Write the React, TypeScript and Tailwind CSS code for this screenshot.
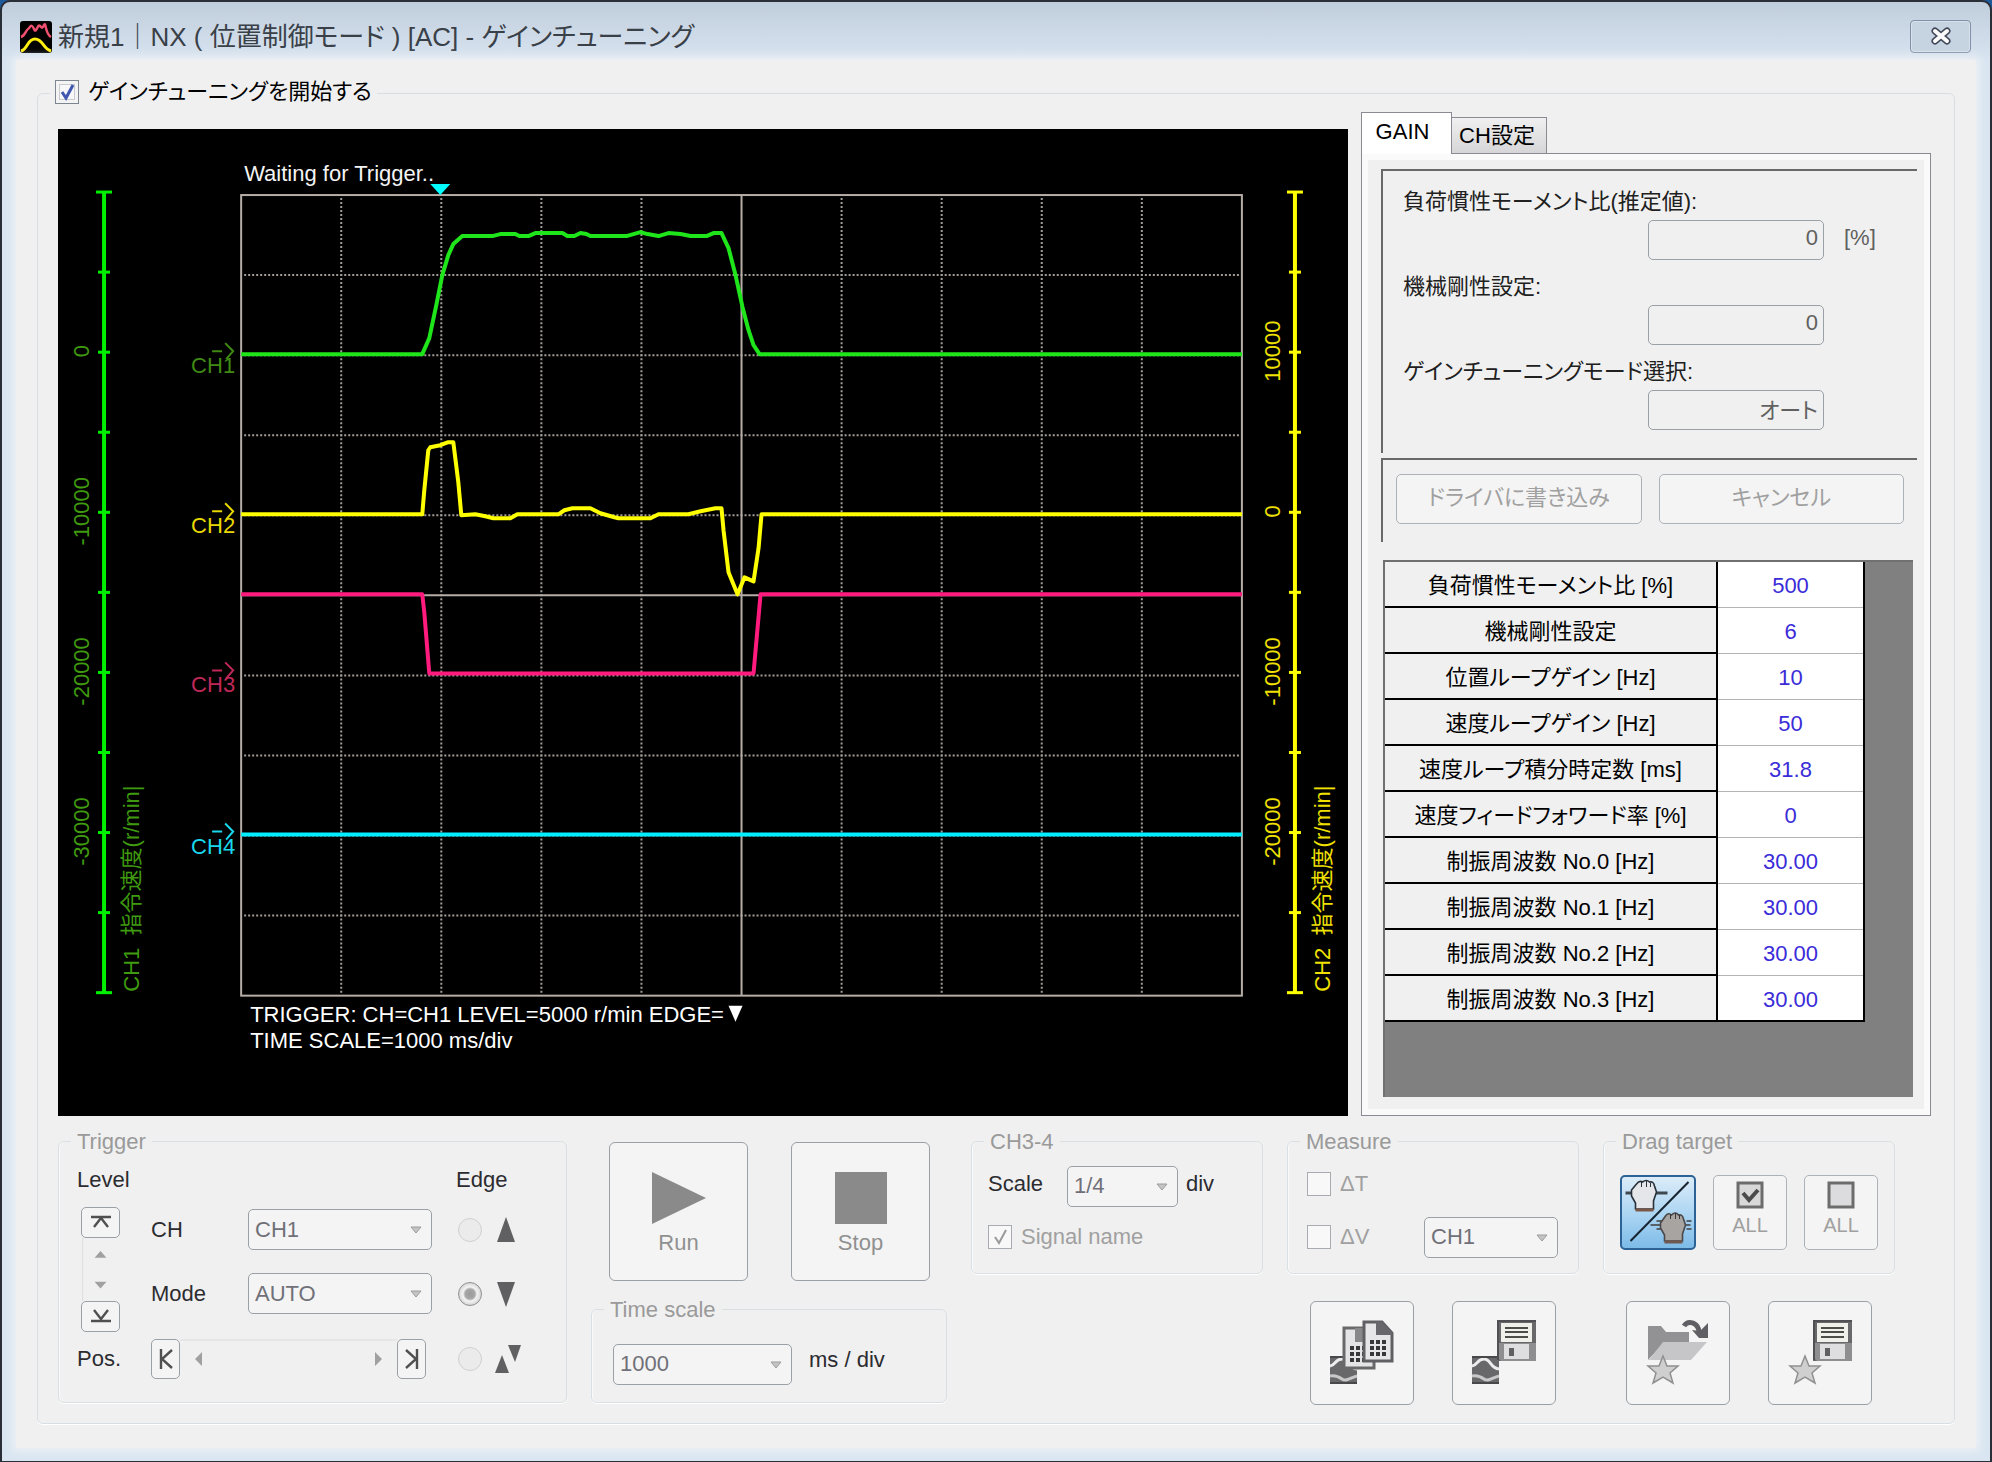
import React from "react";

type Point = [number, number];

const path = (pts: Point[]) => pts.map((p) => p.join(",")).join(" ");

const speedCommand: Point[] = [
  [241, 354], [422, 354], [429, 338], [436, 305], [442, 275], [448, 255], [453, 244], [462, 236],
  [492, 236], [500, 234], [515, 234], [519, 236], [528, 236], [535, 233], [562, 233], [567, 236],
  [574, 236], [580, 233], [586, 234], [590, 236], [626, 236], [633, 234], [640, 232], [647, 234],
  [658, 236], [668, 233], [680, 234], [690, 236], [706, 236], [713, 233], [721, 233], [728, 248],
  [735, 275], [742, 307], [748, 330], [753, 345], [759, 354], [1241, 354],
];

const torque: Point[] = [
  [241, 514], [422, 514], [424, 490], [428, 450], [430, 447], [440, 445], [448, 442], [453, 442],
  [455, 458], [458, 482], [461, 515], [475, 514], [485, 516], [493, 518], [510, 518], [517, 514],
  [558, 514], [564, 510], [572, 508], [590, 508], [600, 513], [614, 517], [618, 518], [650, 518], [658, 514],
  [688, 514], [700, 511], [715, 508], [721, 508], [723, 530], [728, 572], [737, 594], [744, 577],
  [753, 581], [758, 548], [761, 514], [1241, 514],
];

const positioning: Point[] = [
  [241, 594], [422, 594], [424, 612], [429, 673], [753, 673], [760, 594], [1241, 594],
];

const channels = [
  { name: "CH1", y: 354, color: "#3f8a12" },
  { name: "CH2", y: 514, color: "#e8d800" },
  { name: "CH3", y: 673, color: "#c02858" },
  { name: "CH4", y: 834, color: "#19d8ee" },
];

const parameters = [
  ["負荷慣性モーメント比 [%]", "500"],
  ["機械剛性設定", "6"],
  ["位置ループゲイン [Hz]", "10"],
  ["速度ループゲイン [Hz]", "50"],
  ["速度ループ積分時定数 [ms]", "31.8"],
  ["速度フィードフォワード率 [%]", "0"],
  ["制振周波数 No.0 [Hz]", "30.00"],
  ["制振周波数 No.1 [Hz]", "30.00"],
  ["制振周波数 No.2 [Hz]", "30.00"],
  ["制振周波数 No.3 [Hz]", "30.00"],
];

function Axis({ x, color, labelX, labelColor, ticks, title, titleX }: {
  x: number; color: string; labelX: number; labelColor: string; ticks: string[]; title: string; titleX: number;
}) {
  return (
    <g>
      <line x1={x} x2={x} y1={192} y2={992} stroke={color} strokeWidth={4} />
      {Array.from({ length: 11 }, (_, i) => {
        const half = i === 0 || i === 10 ? 8 : 6;
        return <line key={i} x1={x - half} x2={x + half} y1={192 + i * 80} y2={192 + i * 80} stroke={color} strokeWidth={3} />;
      })}
      {ticks.map((t, i) => {
        const y = 351 + i * 160;
        return (
          <text key={t} transform={`translate(${labelX} ${y}) rotate(-90)`} textAnchor="middle" fill={labelColor}>
            {t}
          </text>
        );
      })}
      <text transform={`translate(${titleX} 991) rotate(-90)`} fill={labelColor} xmlSpace="preserve">
        {title}
      </text>
    </g>
  );
}

function Scope() {
  return (
    <svg
      viewBox="58 129 1289 986"
      className="block h-auto w-full bg-black text-[22px] [font-feature-settings:'palt']"
      role="img"
      aria-label="Waveform monitor"
    >
      <text x={244} y={181} fill="#f4f4f4">Waiting for Trigger..</text>
      <g stroke="#a39c96" strokeWidth={2} strokeDasharray="2 2">
        {[1, 2, 3, 4, 6, 7, 8, 9].map((i) => (
          <g key={i}>
            <line x1={241 + i * 100} x2={241 + i * 100} y1={198} y2={994} />
            <line x1={244} x2={1240} y1={195 + i * 80} y2={195 + i * 80} />
          </g>
        ))}
      </g>
      <g stroke="#b5ada6" strokeWidth={2} fill="none">
        <rect x={241} y={195} width={1000} height={800} />
        <line x1={741} x2={741} y1={195} y2={995} />
        <line x1={241} x2={1241} y1={595} y2={595} />
      </g>
      <g fill="none" strokeWidth={4} strokeLinejoin="round">
        <polyline points={path(positioning)} stroke="#ff1a7d" />
        <polyline points={path(torque)} stroke="#ffff00" />
        <polyline points={path(speedCommand)} stroke="#1fe61a" />
        <line x1={241} x2={1241} y1={834} y2={834} stroke="#00eeff" />
      </g>
      <polygon points="430,184 450,184 440,195" fill="#00ffff" />
      {channels.map((c) => (
        <g key={c.name}>
          <path d={`M212 ${c.y - 3}H222M225 ${c.y - 11}L233 ${c.y - 3}L226 ${c.y + 5}`} fill="none" stroke={c.color} strokeWidth={2} />
          <text x={191} y={c.y + 19} fill={c.color}>{c.name}</text>
        </g>
      ))}
      <Axis x={104} color="#00f000" labelX={89} labelColor="#3f9a10" titleX={139}
        ticks={["0", "-10000", "-20000", "-30000"]} title="CH1  指令速度(r/min|" />
      <Axis x={1294} color="#ffff00" labelX={1279} labelColor="#f0e000" titleX={1329}
        ticks={["10000", "0", "-10000", "-20000"]} title="CH2  指令速度(r/min|" />
      <text x={250} y={1021} fill="#fff">TRIGGER: CH=CH1 LEVEL=5000 r/min EDGE=</text>
      <polygon points="728,1005 742,1005 735,1021" fill="#fff" />
      <text x={250} y={1047} fill="#fff">TIME SCALE=1000 ms/div</text>
    </svg>
  );
}

function Group({ title, className, children }: { title: string; className?: string; children: React.ReactNode }) {
  return (
    <fieldset className="min-w-0 rounded-md border border-[#d8e0e4] shadow-[inset_1px_0_0_#fafafa,0_1px_0_#fff]">
      <legend className="ml-3 h-7 bg-[#f0f0f0] px-[6px] leading-7 text-[#9a9a9a]">{title}</legend>
      <div className={className}>{children}</div>
    </fieldset>
  );
}

function Select({ label, value, className }: { label: string; value: string; className: string }) {
  return (
    <div className={`relative h-[41px] ${className}`}>
      <select
        disabled
        aria-label={label}
        defaultValue={value}
        className="h-full w-full appearance-none rounded-[5px] border border-[#9aa0a6] bg-[#f4f4f4] pl-[6px] text-[#707078] opacity-100"
      >
        <option>{value}</option>
      </select>
      <svg viewBox="0 0 12 8" className="pointer-events-none absolute top-[17px] right-[10px] h-2 w-3" aria-hidden="true">
        <path d="M1 1H11L6 7Z" fill="#c4c4c4" stroke="#9c9c9c" />
      </svg>
    </div>
  );
}

function Check({ label, checked, active }: { label: string; checked?: boolean; active?: boolean }) {
  return (
    <label className={`flex items-center gap-[9px] ${active ? "text-black" : "text-[#a0a0a0]"}`}>
      <span className="relative block h-6 w-6 shrink-0">
        <input
          type="checkbox"
          defaultChecked={checked}
          disabled={!active}
          className={`block h-6 w-6 appearance-none border bg-[#f8f8f8] ${active ? "border-[#7d8590] shadow-[inset_0_0_0_3px_#f4f4f4,inset_0_0_0_4px_#c8ccd2]" : "border-[#a8acb0]"}`}
        />
        {checked && (
          <svg viewBox="0 0 24 24" className="pointer-events-none absolute inset-0 h-6 w-6" aria-hidden="true">
            <path d="M7 12L11 18L18 5" fill="none" stroke={active ? "#4258b0" : "#9a9a9a"} strokeWidth={active ? 3 : 2} />
          </svg>
        )}
      </span>
      {label}
    </label>
  );
}

function EndButton({ label, d, className, viewBox }: { label: string; d: string; className: string; viewBox: string }) {
  return (
    <button type="button" disabled aria-label={label} className={`flex items-center justify-center rounded-[5px] border border-[#9aa0a6] bg-[#f4f4f4] ${className}`}>
      <svg viewBox={viewBox} className="h-5 w-5" aria-hidden="true">
        <path d={d} fill="none" stroke="#505050" strokeWidth={2.4} />
      </svg>
    </button>
  );
}

function EdgeOption({ label, checked, children }: { label: string; checked?: boolean; children: React.ReactNode }) {
  return (
    <label className="flex items-center gap-[13px]">
      <input
        type="radio"
        name="edge"
        disabled
        defaultChecked={checked}
        aria-label={label}
        className={`h-6 w-6 appearance-none rounded-full border ${checked ? "border-[#909090] bg-[radial-gradient(circle,#9a9a9a_0,#a8a8a8_5px,#f4f4f4_7px,#d8d8d8_11px)]" : "border-[#d0d0d0] bg-[#ebebeb]"}`}
      />
      <svg viewBox="0 0 28 30" className="h-[30px] w-7" fill="#606062" aria-hidden="true">{children}</svg>
    </label>
  );
}

function Wave() {
  return (
    <g>
      <rect x={0} y={36} width={27} height={28} fill="#68686a" />
      <path d="M0 46C6 45 5 39 12 39S18 48 27 49" fill="none" stroke="#ececec" strokeWidth={3} />
      <path d="M0 56C5 55 8 56 12 59S20 58 27 56" fill="none" stroke="#c8c8c8" strokeWidth={3} />
      <path d="M0 37H27M0 63H27" stroke="#48484a" strokeWidth={2} />
    </g>
  );
}

function Floppy() {
  return (
    <g>
      <rect x={25} y={0} width={39} height={41} fill="#68686a" />
      <path d="M25 23H64V41H29L25 37Z" fill="#8e8e90" />
      <rect x={29} y={3} width={31} height={19} fill="#f0f0ea" />
      <path d="M33 8H56M33 12H56M33 17H56" stroke="#4c4c48" strokeWidth={2} />
      <rect x={32} y={24} width={25} height={15} fill="#dedee0" />
      <rect x={37} y={28} width={5} height={8} fill="#606062" />
      <path d="M26 0V40M25 1H64" stroke="#505054" strokeWidth={2} fill="none" />
    </g>
  );
}

function Star() {
  return <polygon points="17,36 21,46 32,46 24,53 27,63 17,57 7,63 10,53 2,46 13,46" fill="#cfcfcf" stroke="#909090" strokeWidth={1.5} />;
}

function Dots({ x, y }: { x: number; y: number }) {
  return (
    <path
      d={[0, 6, 12].map((dy) => [0, 6, 12].map((dx) => `M${x + dx} ${y + dy}h4`).join("")).join("")}
      stroke="#38383a"
      strokeWidth={4}
    />
  );
}

function IconButton({ label, children }: { label: string; children: React.ReactNode }) {
  return (
    <button type="button" disabled aria-label={label} className="flex h-[104px] w-[104px] items-start rounded-md border border-[#9aa0a6] bg-[#f4f4f4] pt-[18px] pl-[19px]">
      <svg viewBox="0 0 64 64" className="block h-16 w-16 shrink-0 overflow-visible" aria-hidden="true">{children}</svg>
    </button>
  );
}

function Field({ label, value, unit }: { label: string; value: string; unit?: string }) {
  return (
    <label className="block h-[85px]">
      <span className="block h-9 leading-9 text-[#202020]">{label}</span>
      <span className="flex items-center justify-end gap-5">
        <input readOnly value={value} className="h-10 w-[176px] rounded-[5px] border border-[#9aa0a6] bg-[#f0f0f0] px-[5px] pb-1 text-right text-[#606060]" />
        <span className="w-[72px] pb-1 text-[#606060]">{unit}</span>
      </span>
    </label>
  );
}

function TitleBar() {
  return (
    <header className="flex h-[58px] items-center pt-3 pr-[19px] pl-[18px]">
      <svg viewBox="0 0 32 32" className="h-8 w-8" aria-hidden="true">
        <rect width={32} height={32} rx={3} fill="#000" />
        <path d="M1 16C5 15 6 9 8 8S10 4 12 5S14 11 16 9S18 3 20 5S22 8 24 4S25 13 31 16" fill="none" stroke="#f05070" strokeWidth={2.5} />
        <path d="M1 30C8 28 7 18 15 18S23 28 31 30" fill="none" stroke="#ffee10" strokeWidth={3} />
      </svg>
      <h1 className="ml-[6px] flex-1 text-[26px] leading-8 text-[#3a4048]">新規1｜NX ( 位置制御モード ) [AC] - ゲインチューニング</h1>
      <button type="button" aria-label="閉じる" className="mb-[2px] flex h-[33px] w-[61px] items-center justify-center rounded border border-[#8090a8] bg-[#c6d3e0] shadow-[inset_0_0_0_1px_#d8e2ec]">
        <svg viewBox="0 0 22 18" className="h-[18px] w-[22px]" aria-hidden="true">
          <path d="M5 4L17 14M17 4L5 14" stroke="#404858" strokeWidth={7} strokeLinecap="round" />
          <path d="M5 4L17 14M17 4L5 14" stroke="#fafafa" strokeWidth={4} strokeLinecap="round" />
        </svg>
      </button>
    </header>
  );
}

function GainPanel() {
  return (
    <section className="flex w-[570px] shrink-0 flex-col pt-[3px]">
      <div role="tablist" className="flex items-end">
        <button type="button" role="tab" aria-selected="true" className="relative z-10 -mb-px h-[42px] w-[91px] border border-b-0 border-[#8a8a92] bg-white pr-2 pb-1 text-black">GAIN</button>
        <button type="button" role="tab" aria-selected="false" className="h-9 w-[95px] border border-b-0 border-l-0 border-[#8a8a92] bg-linear-to-b from-[#f0f0f0] to-[#d6d6d8] pr-1 text-black">CH設定</button>
      </div>
      <div className="flex flex-1 flex-col border border-[#8a8a92] bg-[#f0f0f0] pt-[15px] pr-[11px] pb-[18px] pl-[17px] shadow-[inset_0_0_0_6px_#fafafa]">
        <div className="mx-[2px] h-[284px] border-t-2 border-l-2 border-[#696969] pt-[13px] pr-[1px] pl-[20px]">
          <Field label="負荷慣性モーメント比(推定値):" value="0" unit="[%]" />
          <Field label="機械剛性設定:" value="0" />
          <Field label="ゲインチューニングモード選択:" value="オート" />
        </div>
        <div className="mx-[2px] mt-[5px] flex h-[84px] gap-[17px] border-t-2 border-l-2 border-[#696969] px-[13px] pt-[14px]">
          <button type="button" disabled className="h-[50px] flex-1 rounded-[5px] border border-[#adb2b8] bg-[#f4f4f4] pb-[2px] text-[#a0a0a0]">ドライバに書き込み</button>
          <button type="button" disabled className="h-[50px] flex-1 rounded-[5px] border border-[#adb2b8] bg-[#f4f4f4] pb-[2px] text-[#a0a0a0]">キャンセル</button>
        </div>
        <div className="mr-[6px] ml-1 mt-[18px] flex-1 border-t-2 border-l-2 border-[#707070] bg-[#808080]">
          <table className="w-[480px] border-separate border-spacing-0 border-r-2 border-black">
            <tbody>
              {parameters.map(([name, value], i) => (
                <tr key={name} className="h-[46px]">
                  <th scope="row" className="w-[333px] border-r-2 border-b-2 border-black bg-[#f0f0f0] p-0 pt-[3px] text-center font-normal text-black">{name}</th>
                  <td className={`bg-white p-0 pt-[3px] text-center text-[#3a2cd8] ${i === parameters.length - 1 ? "border-b-2 border-black" : "border-b border-[#b4b4b4]"}`}>{value}</td>
                </tr>
              ))}
            </tbody>
          </table>
        </div>
      </div>
    </section>
  );
}

function TriggerGroup() {
  return (
    <div className="w-[509px] shrink-0">
      <Group title="Trigger" className="grid grid-cols-[74px_97px_184px_1fr] grid-rows-[48px_52px_76px_54px] items-center pb-4 pl-[18px]">
        <span className="col-span-3">Level</span>
        <span className="pl-6">Edge</span>

        <div className="row-span-2 ml-1 flex h-full w-[39px] flex-col items-center justify-between pt-[3px]">
          <EndButton label="Level max" viewBox="0 0 20 20" d="M0 5H20M3 15L10 6L17 15" className="h-[31px] w-full" />
          <svg viewBox="0 0 38 64" className="h-16 w-full" aria-hidden="true">
            <path d="M1 0V64" stroke="#dcdcdc" />
            <path d="M13 20L19 13L25 20ZM13 44L19 51L25 44Z" fill="#a0a0a0" />
          </svg>
          <EndButton label="Level min" viewBox="0 0 20 20" d="M0 15H20M3 4L10 13L17 4" className="h-[31px] w-full" />
        </div>
        <span>CH</span>
        <Select label="Trigger CH" value="CH1" className="w-full" />
        <div className="pl-[26px]">
          <EdgeOption label="Rising edge"><polygon points="2,27 11,2 20,27" /></EdgeOption>
        </div>

        <span>Mode</span>
        <Select label="Trigger mode" value="AUTO" className="w-full" />
        <div className="pl-[26px]">
          <EdgeOption label="Falling edge" checked><polygon points="2,3 20,3 11,28" /></EdgeOption>
        </div>

        <span>Pos.</span>
        <div className="col-span-2 flex w-[275px] items-center">
          <EndButton label="Pos start" viewBox="0 0 20 20" d="M5 0V20M16 1L6 10L16 19" className="h-10 w-[29px]" />
          <svg viewBox="0 0 217 40" className="h-10 flex-1" aria-hidden="true">
            <path d="M0 1H217" stroke="#dcdcdc" />
            <path d="M22 13L15 20L22 27ZM195 13L202 20L195 27Z" fill="#a0a0a0" />
          </svg>
          <EndButton label="Pos end" viewBox="0 0 20 20" d="M15 0V20M4 1L14 10L4 19" className="h-10 w-[29px]" />
        </div>
        <div className="pl-[26px]">
          <EdgeOption label="Both edges">
            <polygon points="0,29 7,11 14,29" />
            <polygon points="13,1 26,1 20,18" />
          </EdgeOption>
        </div>
      </Group>
    </div>
  );
}

function Controls() {
  const run = "flex h-[139px] w-[139px] flex-col items-center rounded-md border border-[#9aa0a6] bg-[#f4f4f4] pt-7 text-[#909090]";
  const small = "flex h-[75px] flex-1 flex-col items-center rounded-[5px] border border-[#adb2b8] bg-[#f4f4f4] pt-[5px] text-[20px] leading-7 text-[#a0a0a0]";
  return (
    <div className="mt-3 flex items-start gap-6">
      <TriggerGroup />
      <div className="w-[356px] shrink-0 pt-[14px]">
        <div className="mb-[15px] flex gap-[43px] pl-[18px]">
          <button type="button" disabled className={run}>
            <svg viewBox="0 0 54 54" className="mb-1 h-[54px] w-[54px]" aria-hidden="true"><polygon points="0,1 54,27 0,53" fill="#8a8a8a" /></svg>
            Run
          </button>
          <button type="button" disabled className={run}>
            <svg viewBox="0 0 54 54" className="mb-1 h-[54px] w-[54px]" aria-hidden="true"><rect x={1} y={1} width={52} height={52} fill="#8a8a8a" /></svg>
            Stop
          </button>
        </div>
        <Group title="Time scale" className="flex items-center gap-[17px] pt-5 pb-[17px] pl-[21px]">
          <Select label="Time scale" value="1000" className="w-[179px]" />
          <span className="pb-2">ms / div</span>
        </Group>
      </div>
      <div className="w-[292px] shrink-0">
        <Group title="CH3-4" className="px-4 pt-[10px] pb-5">
          <div className="flex items-center">
            <span className="w-[79px] pb-1">Scale</span>
            <Select label="CH3-4 scale" value="1/4" className="w-[111px]" />
            <span className="pb-1 pl-2">div</span>
          </div>
          <div className="mt-4 h-[30px]"><Check label="Signal name" checked /></div>
        </Group>
      </div>
      <div className="w-[292px] shrink-0">
        <Group title="Measure" className="pt-2 pr-5 pb-[15px] pl-[19px]">
          <div className="flex h-10 items-center"><Check label="ΔT" /></div>
          <div className="mt-[13px] flex items-center justify-between">
            <Check label="ΔV" />
            <Select label="Measure channel" value="CH1" className="w-[134px]" />
          </div>
        </Group>
        <div className="mt-[27px] flex gap-[38px] pl-[23px]">
          <IconButton label="Copy waveform data">
            <Wave />
            <path d="M14 8H44V48H14Z" fill="#e4e4e6" stroke="#68686a" strokeWidth={3} />
            <rect x={25} y={8} width={8} height={14} fill="#88888a" />
            <Dots x={20} y={28} />
            <path d="M34 2H52L62 13V41H34Z" fill="#e6e6e8" stroke="#606064" strokeWidth={3} />
            <path d="M46 2H52L62 13V15H46Z" fill="#68686c" />
            <Dots x={40} y={22} />
          </IconButton>
          <IconButton label="Save waveform"><Wave /><Floppy /></IconButton>
        </div>
      </div>
      <div className="w-[292px] shrink-0">
        <Group title="Drag target" className="flex gap-[17px] px-4 pt-[19px] pb-[23px]">
          <button type="button" aria-label="Toggle drag target" className="h-[75px] flex-1 rounded-[5px] border-2 border-[#2c6296] bg-linear-to-b from-[#dcecf8] from-0% via-[#a9d4f2] via-55% to-[#7dbbe8] to-100%">
            <svg viewBox="2 2 71 71" className="block h-full w-full" aria-hidden="true">
              <path d="M10 66L68 7" stroke="#182430" strokeWidth={2} />
              <path d="M5 18H47" stroke="#404850" strokeWidth={3} />
              <path d="M15 34V28L11 21V15L16 9Q19 5 22 7Q26 4 29 7Q33 6 34 11L36 17L33 26V34Z" fill="#e4e6ea" stroke="#28303a" strokeWidth={1.6} />
              <path d="M21 7V12M26 6V12M30 8V12" stroke="#28303a" />
              <path d="M15 35H33" stroke="#7a5848" strokeWidth={3} />
              <path d="M30 50H70M36 46H44M66 46H71M36 54H44M66 54H71" stroke="#586068" strokeWidth={2} />
              <path d="M44 66V60L40 53V48L45 41Q48 37 51 40Q55 36 58 40Q62 39 63 44L65 50L62 59V66Z" fill="#a8a4a2" stroke="#4a484a" strokeWidth={1.6} />
              <path d="M50 39V44M55 38V44M59 40V44" stroke="#38383a" />
              <path d="M44 67H62" stroke="#705850" strokeWidth={3} />
            </svg>
          </button>
          <button type="button" disabled className={small}>
            <svg viewBox="0 0 28 28" className="mb-[2px] h-7 w-7" aria-hidden="true">
              <rect x={2} y={2} width={24} height={24} fill="#d8d8d8" stroke="#6c6c6c" strokeWidth={3} />
              <path d="M7 12L13 19L22 9" fill="none" stroke="#4c4c4c" strokeWidth={4} />
            </svg>
            ALL
          </button>
          <button type="button" disabled className={small}>
            <svg viewBox="0 0 28 28" className="mb-[2px] h-7 w-7" aria-hidden="true">
              <rect x={2} y={2} width={24} height={24} fill="#dcdcde" stroke="#6c6c6c" strokeWidth={3} />
            </svg>
            ALL
          </button>
        </Group>
        <div className="mt-[27px] flex gap-[38px] pl-[23px]">
          <IconButton label="Load favorite">
            <path d="M2 6H15L20 12H43V24H17L2 40Z" fill="#929294" />
            <path d="M17 22H61L45 40H3Z" fill="#c6c6c8" />
            <path d="M38 6Q41 1 47 3Q53 6 53 12" fill="none" stroke="#606064" strokeWidth={5} />
            <polygon points="46,10 54,11 62,3 62,18 53,18" fill="#606064" />
            <Star />
          </IconButton>
          <IconButton label="Save favorite"><Floppy /><Star /></IconButton>
        </div>
      </div>
    </div>
  );
}

export default function App() {
  return (
    <div className="flex min-h-screen flex-col bg-[#1c5a9c] font-['Liberation_Sans','Noto_Sans_CJK_JP',sans-serif] text-[22px] leading-7 text-[#2c2c30] [font-feature-settings:'palt']">
      <div className="flex flex-1 flex-col rounded-t-[10px] border-2 border-[#2a2e36] bg-[linear-gradient(#c0cddb_0px,#d9e5f1_60px,#d9e6f1_100%)] pb-[13px]">
        <TitleBar />
        <main className="mx-[14px] flex-1 bg-[#f0f0f0] px-[21px] pt-[17px] pb-6 shadow-[0_0_8px_3px_#eef1f5]">
          <fieldset className="min-w-0 rounded-md border border-[#d8dfe3] pr-[23px] pb-[18px] pl-5 shadow-[0_1px_0_#fff]">
            <legend className="-ml-2 flex h-8 items-center bg-[#f0f0f0] px-[5px] pb-[3px]">
              <Check label="ゲインチューニングを開始する" checked active />
            </legend>
            <div className="flex gap-[13px]">
              <div className="min-w-0 flex-1 pt-5"><Scope /></div>
              <GainPanel />
            </div>
            <Controls />
          </fieldset>
        </main>
      </div>
    </div>
  );
}
